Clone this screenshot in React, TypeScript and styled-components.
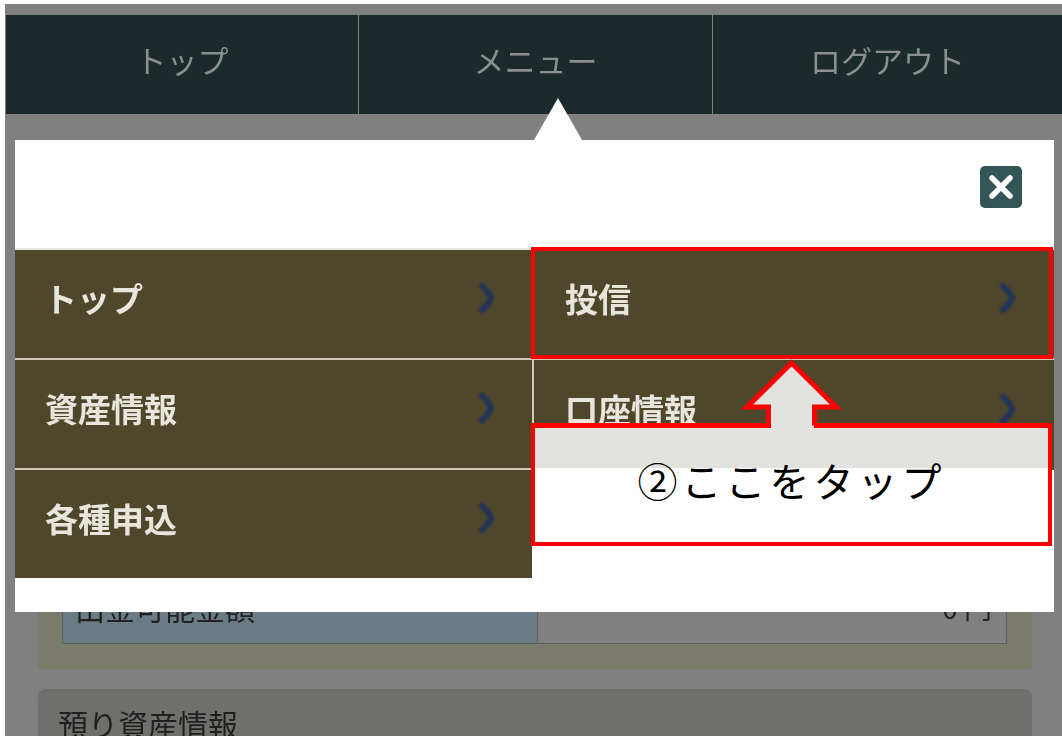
import React from "react";
import styled, { createGlobalStyle } from "styled-components";

const Global = createGlobalStyle`
  html, body { margin: 0; padding: 0; background: #fff; }
  body { font-family: "Noto Sans CJK JP", "Liberation Sans", sans-serif; }
`;

const Frame = styled.div`
  width: 1062px;
  height: 738px;
  padding: 4px 0 2px 5px;
  box-sizing: border-box;
  overflow: hidden;
`;

const Page = styled.div`
  position: relative;
  width: 1057px;
  height: 732px;
  background: #808080;
  overflow: hidden;
  padding-top: 11px;
  box-sizing: border-box;
`;

const TopNav = styled.nav`
  display: grid;
  grid-template-columns: 353px 354px 1fr;
  height: 99px;
  margin-left: 1px;
  background: #1b2a2a;
`;

const NavItem = styled.div<{ $divider?: boolean }>`
  display: flex;
  align-items: center;
  justify-content: center;
  font-size: 31px;
  color: #8a8f8f;
  filter: blur(0.5px);
  padding-bottom: 11px;
  box-sizing: border-box;
  border-right: ${(p) => (p.$divider ? "1px solid #7c8484" : "none")};
`;

const Body = styled.div`
  padding: 37px 30px 0 33px;
  display: flex;
  flex-direction: column;
  gap: 20px;
`;

const Panel = styled.section`
  height: 518px;
  box-sizing: border-box;
  background: #7b7b6b;
  border-radius: 4px;
  padding: 0 25px 25px 24px;
  display: flex;
  flex-direction: column;
  justify-content: flex-end;
`;

const InfoRow = styled.div`
  display: grid;
  grid-template-columns: 474px 1fr;
  height: 68px;
  border: 1px solid #5a6060;
  box-sizing: border-box;
`;

const InfoLabel = styled.div`
  background: #6c7c85;
  font-size: 30px;
  color: #222;
  padding-left: 12px;
  line-height: 60px;
  filter: blur(0.5px);
`;

const InfoValue = styled.div`
  background: #808080;
  font-size: 28px;
  color: #222;
  text-align: right;
  padding-right: 14px;
  line-height: 60px;
  border-left: 1px solid #5a6060;
  filter: blur(0.5px);
`;

const SectionHead = styled.div`
  height: 80px;
  background: #6f6f6c;
  border-radius: 8px 8px 0 0;
  padding: 8px 0 0 20px;
  box-sizing: border-box;
  font-size: 30px;
  line-height: 52px;
  color: #1f1f1f;
  filter: blur(0.5px);
`;

const Modal = styled.div`
  position: absolute;
  left: 10px;
  top: 136px;
  width: 1039px;
  height: 472px;
  background: #fff;
`;

const Pointer = styled.div`
  position: absolute;
  left: 519px;
  top: -42px;
  width: 0;
  height: 0;
  border-left: 24px solid transparent;
  border-right: 24px solid transparent;
  border-bottom: 42px solid #fff;
`;

const ModalTop = styled.div`
  height: 110px;
  display: flex;
  justify-content: flex-end;
  align-items: flex-start;
  padding: 26px 32px 0 0;
  box-sizing: border-box;
  border-bottom: 2px solid #e8e5da;
`;

const CloseButton = styled.button`
  width: 42px;
  height: 42px;
  padding: 0;
  border: 0;
  border-radius: 5px;
  background: #335555;
  display: flex;
  align-items: center;
  justify-content: center;
`;

const MenuGrid = styled.div`
  display: grid;
  grid-template-columns: 517px 522px;
  grid-template-rows: 110px 110px 108px;
`;

const MenuItem = styled.div<{ $divider?: boolean; $right?: boolean; $indent?: number }>`
  display: flex;
  align-items: center;
  justify-content: space-between;
  background: #4f472b;
  box-sizing: border-box;
  border-bottom: ${(p) => (p.$divider ? "2px solid #cfc9b5" : "none")};
  border-left: ${(p) => (p.$right ? "2px solid #cfc9b5" : "none")};
  padding: 0 ${(p) => (p.$right ? "35px" : "34px")} 12px ${(p) => p.$indent ?? 30}px;
`;

const MenuLabel = styled.span`
  font-size: 33px;
  font-weight: 700;
  color: #e8e6dc;
  filter: blur(0.5px);
`;

const Chevron = styled.svg`
  width: 20px;
  height: 32px;
  flex: none;
  filter: blur(1px);
`;

const TargetBox = styled.div`
  position: absolute;
  left: 526px;
  top: 243px;
  width: 522px;
  height: 112px;
  border: 4px solid #ff0000;
  box-sizing: border-box;
`;

const CalloutBox = styled.div`
  position: absolute;
  left: 526px;
  top: 419px;
  width: 521px;
  height: 123px;
  border: 4px solid #ff0000;
  border-top-width: 5px;
  box-sizing: border-box;
  background: linear-gradient(#e2e2de 40px, #fff 40px);
  display: flex;
  align-items: center;
  justify-content: center;
  padding-bottom: 10px;
`;

const CalloutText = styled.span`
  font-family: "Noto Sans CJK JP", serif;
  font-size: 40px;
  letter-spacing: 4px;
  color: #000;
`;

const Arrow = styled.svg`
  position: absolute;
  left: 735px;
  top: 352px;
  width: 104px;
  height: 74px;
  overflow: visible;
`;

const ChevronIcon = () => (
  <Chevron viewBox="0 0 20 32">
    <path
      d="M4 4 Q11 10 13 16 Q11 22 4 28"
      fill="none"
      stroke="#22345a"
      strokeWidth="6"
      strokeLinecap="round"
    />
  </Chevron>
);

const leftMenu = ["トップ", "資産情報", "各種申込"];
const rightMenu = ["投信", "口座情報"];

export default function App() {
  return (
    <>
      <Global />
      <Frame>
        <Page>
          <TopNav>
            <NavItem $divider>トップ</NavItem>
            <NavItem $divider>メニュー</NavItem>
            <NavItem>ログアウト</NavItem>
          </TopNav>
          <Body>
            <Panel>
              <InfoRow>
                <InfoLabel>出金可能金額</InfoLabel>
                <InfoValue>0 円</InfoValue>
              </InfoRow>
            </Panel>
            <SectionHead>預り資産情報</SectionHead>
          </Body>
          <Modal>
            <Pointer />
            <ModalTop>
              <CloseButton aria-label="閉じる">
                <svg width="26" height="26" viewBox="0 0 26 26">
                  <path d="M4 4 L22 22 M22 4 L4 22" stroke="#fff" strokeWidth="5.5" strokeLinecap="round" />
                </svg>
              </CloseButton>
            </ModalTop>
            <MenuGrid>
              <MenuItem $divider $indent={29}>
                <MenuLabel>{leftMenu[0]}</MenuLabel>
                <ChevronIcon />
              </MenuItem>
              <MenuItem $divider $right $indent={31}>
                <MenuLabel>{rightMenu[0]}</MenuLabel>
                <ChevronIcon />
              </MenuItem>
              <MenuItem $divider>
                <MenuLabel>{leftMenu[1]}</MenuLabel>
                <ChevronIcon />
              </MenuItem>
              <MenuItem $right $indent={31}>
                <MenuLabel>{rightMenu[1]}</MenuLabel>
                <ChevronIcon />
              </MenuItem>
              <MenuItem>
                <MenuLabel>{leftMenu[2]}</MenuLabel>
                <ChevronIcon />
              </MenuItem>
            </MenuGrid>
          </Modal>
          <TargetBox />
          <CalloutBox>
            <CalloutText>②ここをタップ</CalloutText>
          </CalloutBox>
          <Arrow viewBox="0 0 104 74">
            <polygon points="51.5,8 96,51 74,51 74,72 31,72 31,51 7,51" fill="#e2e2de" />
            <polyline
              points="28.5,69.5 28.5,51 7,51 51.5,7 96,51 74.5,51 74.5,69.5"
              fill="none"
              stroke="#ff0000"
              strokeWidth="5"
            />
          </Arrow>
        </Page>
      </Frame>
    </>
  );
}
